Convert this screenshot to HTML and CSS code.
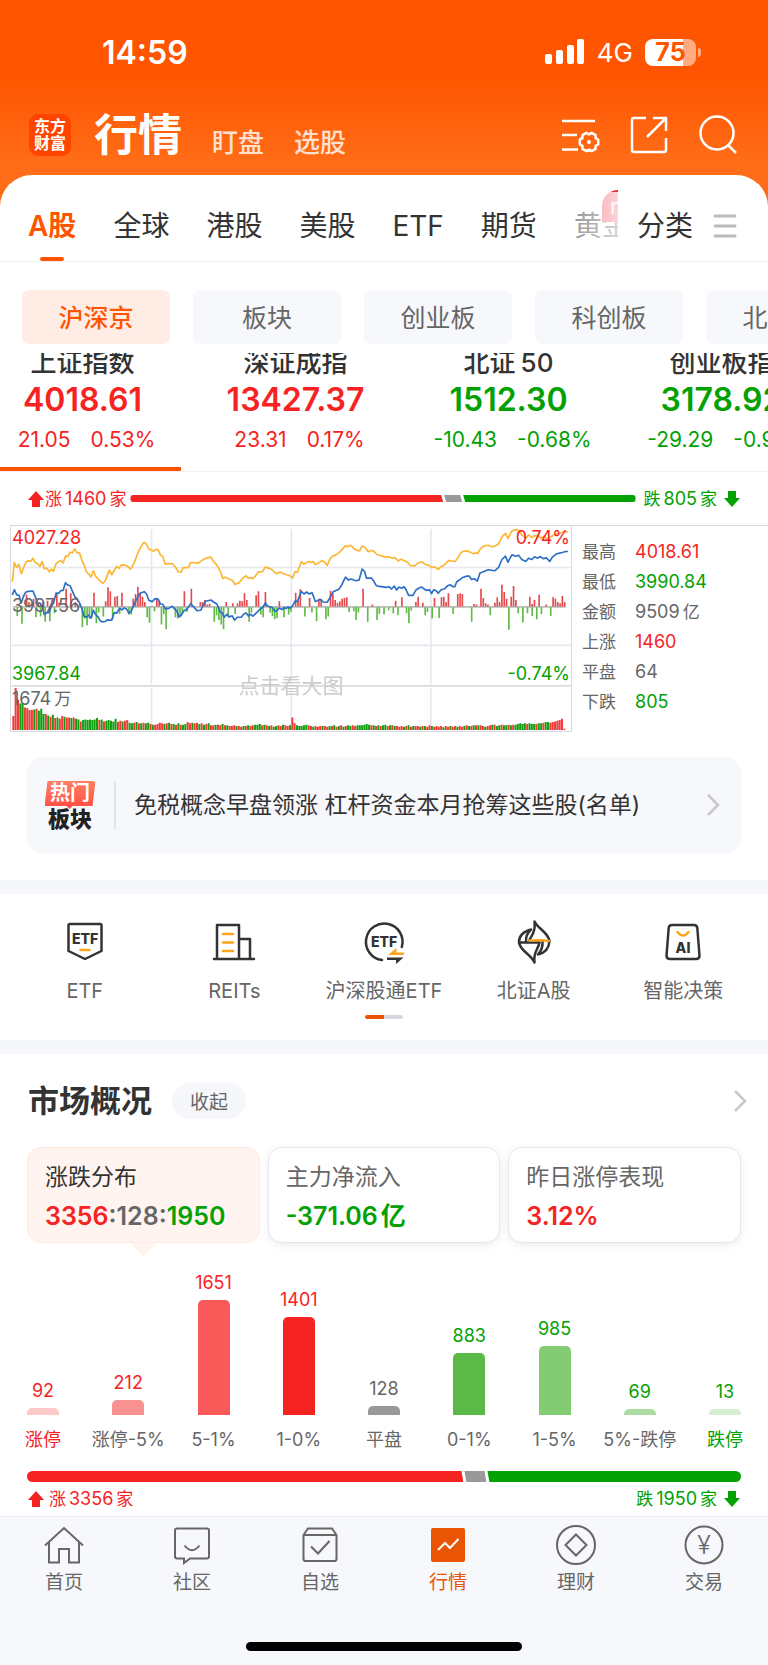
FILE: index.html
```html
<!DOCTYPE html>
<html lang="zh-CN">
<head>
  <meta charset="UTF-8" />
  <meta name="viewport" content="width=device-width, initial-scale=1.0">
  <title>行情 - 东方财富</title>
  <link rel="stylesheet" href="styles.css">
</head>
<body>
<div class="app">
  <div class="status-bar">
    <span class="time">14:59</span>
    <div class="status-right">
      <svg class="signal" width="40" height="26" viewBox="0 0 40 26" fill="#fff">
        <rect x="0" y="15" width="7" height="10" rx="2"/>
        <rect x="11" y="11" width="7" height="14" rx="2"/>
        <rect x="22" y="6" width="7" height="19" rx="2"/>
        <rect x="32" y="0" width="7" height="25" rx="2"/>
      </svg>
      <span class="network">4G</span>
      <span class="battery">75</span>
    </div>
  </div>

  <header class="header">
    <div class="logo">东方<br>财富</div>
    <h1>行情</h1>
    <a class="sub-link" href="#">盯盘</a>
    <a class="sub-link" href="#">选股</a>
    <div class="header-icons">
      <button aria-label="设置">
        <svg width="40" height="40" viewBox="0 0 40 40">
          <path d="M2 6h33M2 20h15M2 34.500h16"/>
          <path d="M38.200 24.700V29.300L35.600 30.800V33.800L31.600 36.100 29 34.600 26.400 36.100 22.400 33.800V30.800L19.800 29.300V24.700L22.400 23.200V20.200L26.400 17.900 29 19.400 31.600 17.900 35.600 20.200V23.200Z"/>
          <circle cx="29" cy="27" r="2" fill="#fff" stroke="none"/>
        </svg>
      </button>
      <button aria-label="分享">
        <svg width="40" height="40" viewBox="0 0 40 40">
          <path d="M17 3H5Q3 3 3 5V35Q3 37 5 37H35Q37 37 37 35V23M24 3H37V16M37 3L18 22"/>
        </svg>
      </button>
      <button aria-label="搜索">
        <svg width="40" height="40" viewBox="0 0 40 40">
          <circle cx="19" cy="18" r="16.500"/>
          <path d="M30 30L38 38"/>
        </svg>
      </button>
    </div>
  </header>

  <main class="sheet">
    <nav class="tabs">
      <div class="tabs-scroll">
        <a class="active" href="#">A股</a>
        <a href="#">全球</a>
        <a href="#">港股</a>
        <a href="#">美股</a>
        <a href="#">ETF</a>
        <a href="#">期货</a>
        <a href="#">黄金<i class="badge">new</i></a>
      </div>
      <button class="category">分类
        <svg width="24" height="24" viewBox="0 0 24 24"><path d="M2 2H22M2 12H22M2 22H22"/></svg>
      </button>
    </nav>

    <div class="chips">
      <button class="chip active">沪深京</button>
      <button class="chip">板块</button>
      <button class="chip">创业板</button>
      <button class="chip">科创板</button>
      <button class="chip">北交所</button>
    </div>

    <div class="indexes">
      <a class="index up active" href="#">
        <span class="name">上证指数</span>
        <strong>4018.61</strong>
        <span class="change"><span>21.05</span><span>0.53%</span></span>
      </a>
      <a class="index up" href="#">
        <span class="name">深证成指</span>
        <strong>13427.37</strong>
        <span class="change"><span>23.31</span><span>0.17%</span></span>
      </a>
      <a class="index down" href="#">
        <span class="name">北证<b>50</b></span>
        <strong>1512.30</strong>
        <span class="change"><span>-10.43</span><span>-0.68%</span></span>
      </a>
      <a class="index down" href="#">
        <span class="name">创业板指</span>
        <strong>3178.92</strong>
        <span class="change"><span>-29.29</span><span>-0.91%</span></span>
      </a>
    </div>

    <div class="breadth">
      <span class="count up"><svg width="16" height="16" viewBox="0 0 16 16"><path d="M8 0L16 9H12V16H4V9H0Z"/></svg>涨<b>1460</b>家</span>
      <div class="ratio">
        <i class="r-up" style="flex-grow: 1460"></i>
        <i class="r-flat" style="flex-grow: 64"></i>
        <i class="r-down" style="flex-grow: 805"></i>
      </div>
      <span class="count down">跌<b>805</b>家<svg width="16" height="16" viewBox="0 0 16 16"><path d="M8 16L0 7H4V0H12V7H16Z"/></svg></span>
    </div>

    <div class="quote">
      <div class="chart">
        <svg viewBox="30 45 1686 618" preserveAspectRatio="none">
          <g class="grid">
            <path d="M32 170H1716M32 405H1716M453 54V522M874 54V522M1294 54V522M453 533V660M874 533V660M1294 533V660"/>
            <path class="sep" d="M32 527H1716"/>
            <path class="mid" d="M36 289H1700"/>
          </g>
          <path id="diffUp" class="bar-up"/>
          <path id="diffDown" class="bar-down"/>
          <path id="volUp" class="vol-up"/>
          <path id="volDown" class="vol-down"/>
          <polyline class="line-avg" points="34,213 40,155 47,170 54,160 61,189 68,170 75,154 82,150 90,151 96,142 103,155 110,158 117,167 124,152 130,174 138,172 145,183 152,175 158,181 166,158 173,153 180,149 187,156 194,136 201,137 208,124 215,126 222,114 229,126 236,126 243,147 250,162 257,183 264,190 271,199 278,180 285,197 292,204 299,211 306,218 313,212 326,178 333,192 348,167 355,173 362,163 369,162 376,164 383,168 390,175 397,164 404,148 411,129 418,114 425,101 431,94 438,100 445,115 452,117 459,121 466,115 473,117 480,132 487,137 494,160 508,158 516,159 524,168 534,183 542,184 549,170 563,171 571,155 594,157 606,148 618,141 632,139 640,152 650,163 660,182 668,203 676,199 684,204 697,209 704,221 716,217 728,202 738,195 745,203 752,200 758,204 766,196 775,184 788,182 795,169 806,172 816,177 828,189 840,184 850,189 868,194 878,202 885,182 892,185 904,153 912,160 922,154 928,152 934,155 940,152 946,161 952,159 965,150 973,152 982,164 990,145 998,136 1008,132 1017,126 1026,117 1036,105 1045,107 1053,103 1062,113 1070,118 1080,120 1087,105 1096,110 1106,123 1114,119 1122,121 1132,131 1142,134 1155,138 1168,138 1178,142 1185,140 1196,150 1205,145 1217,151 1224,154 1232,164 1245,165 1257,156 1267,153 1278,161 1287,163 1296,170 1306,168 1316,176 1324,168 1334,163 1348,149 1367,152 1374,143 1384,126 1392,121 1402,120 1412,123 1422,129 1428,126 1435,128 1443,114 1454,105 1466,103 1476,107 1486,106 1498,99 1508,78 1519,67 1526,83 1538,60 1550,56 1558,58 1568,72 1580,82 1588,72 1598,80 1606,74 1616,75 1625,82 1634,76 1644,84 1653,80 1662,73 1672,70 1682,67 1694,63 1707,62"/>
          <polyline class="line-price" points="34,253 40,237 47,252 54,254 61,277 68,256 75,244 82,242 96,241 103,258 110,277 117,277 124,289 130,312 138,306 145,306 152,286 158,277 166,247 173,248 180,240 187,239 194,216 201,223 208,225 215,242 222,258 229,264 236,276 243,293 250,317 257,320 264,314 271,323 278,299 285,312 292,319 299,331 306,334 313,333 320,328 333,329 341,306 348,308 357,293 364,298 371,292 378,295 385,308 392,302 399,285 406,270 413,256 420,247 431,243 438,250 445,269 455,273 464,264 473,265 480,280 487,281 494,294 504,294 515,287 522,294 529,301 536,319 542,315 549,302 560,295 571,279 582,291 590,300 601,299 608,285 616,272 632,268 640,274 650,280 660,305 666,307 672,320 680,311 686,319 696,316 703,329 711,320 723,320 731,310 738,307 745,316 752,311 758,317 768,308 778,297 788,290 796,277 803,287 816,290 824,303 832,299 838,292 846,297 852,291 858,294 864,289 870,293 878,285 886,271 892,273 904,242 912,250 920,244 928,250 936,246 942,260 946,273 952,270 960,266 970,274 982,275 990,262 1000,243 1017,236 1026,222 1037,199 1046,208 1054,205 1068,210 1078,208 1087,175 1095,183 1100,202 1115,202 1122,211 1130,225 1140,227 1160,230 1168,228 1176,235 1184,226 1191,238 1198,229 1206,233 1213,228 1220,238 1227,254 1240,254 1250,237 1260,231 1267,229 1275,236 1283,239 1290,237 1296,249 1303,237 1311,241 1316,248 1325,237 1336,234 1345,225 1352,222 1360,228 1366,228 1372,213 1380,208 1390,200 1402,196 1410,196 1416,206 1425,204 1434,211 1442,187 1452,183 1466,177 1486,180 1498,170 1508,146 1519,136 1526,154 1538,132 1550,136 1558,133 1568,146 1580,152 1588,142 1598,146 1606,138 1616,142 1622,137 1634,144 1642,141 1652,152 1660,139 1672,129 1690,125 1700,122 1707,122"/>
        </svg>
        <span class="lbl top up">4027.28</span>
        <span class="lbl middle">3997.56</span>
        <span class="lbl bottom down">3967.84</span>
        <span class="lbl volume">1674<b>万</b></span>
        <span class="lbl top right up">0.74%</span>
        <span class="lbl bottom right down">-0.74%</span>
        <span class="hint">点击看大图</span>
      </div>
      <dl class="stats">
        <dt>最高</dt><dd class="up">4018.61</dd>
        <dt>最低</dt><dd class="down">3990.84</dd>
        <dt>金额</dt><dd>9509<b>亿</b></dd>
        <dt>上涨</dt><dd class="up">1460</dd>
        <dt>平盘</dt><dd>64</dd>
        <dt>下跌</dt><dd class="down">805</dd>
      </dl>
    </div>

    <a class="hot" href="#">
      <span class="hot-tag"><em>热门</em><strong>板块</strong></span>
      <span class="hot-text">免税概念早盘领涨 杠杆资金本月抢筹这些股(名单)</span>
      <svg class="chevron" width="14" height="24" viewBox="0 0 14 24"><path d="M2 2L12 12 2 22"/></svg>
    </a>

    <section class="shortcuts">
      <ul>
        <li><a href="#">
          <svg width="44" height="44" viewBox="0 0 44 44">
            <path d="M5.500 5.500Q5.500 4 7 4H37Q38.500 4 38.500 5.500V31L22 39 5.500 31Z"/>
            <path class="accent" d="M17.500 30H26.500"/>
            <text x="22" y="24">ETF</text>
          </svg>ETF</a></li>
        <li><a href="#">
          <svg width="44" height="44" viewBox="0 0 44 44">
            <path d="M2 39H42M5 39V5H27V39M27 19H38V39"/>
            <path class="accent" d="M11 14H21M11 22.500H21M11 31H21"/>
          </svg>REITs</a></li>
        <li><a href="#">
          <svg width="44" height="44" viewBox="0 0 44 44">
            <path d="M39.800 27A18.300 18.300 0 1 0 20 40"/>
            <text x="22" y="27">ETF</text>
            <path class="fill-accent" d="M26 35L34.500 28V32.500H42V35Z"/>
            <path class="fill-dark" d="M25 37.500H41.500L34 44V40H25Z"/>
          </svg>沪深股通ETF</a></li>
        <li><a href="#">
          <svg width="44" height="44" viewBox="0 0 44 44">
            <path d="M17.500 20C19 16 24 13 22.500 1.500 26 9 36 12 37.500 21M27.500 22.500C26 30 21 32 22.500 42.500 19 34 8 31 7 22.500ZM19 9.500C10 12 7 17 7 22M19 9.500C14 14 14 18 14 22M37.500 21C37 28 33 33 26 34.500M26 34.500C30 30 31 26 30.500 21"/>
            <path class="accent" d="M17.500 20.500C24 21 28 19 37 21"/>
          </svg>北证A股</a></li>
        <li><a href="#">
          <svg width="44" height="44" viewBox="0 0 44 44">
            <path d="M11 5H33Q36 5 36.300 8L38.500 35.500Q38.500 39 35 39H9Q5.500 39 5.500 35.500L7.700 8Q8 5 11 5Z"/>
            <path class="accent" d="M16.500 12Q22 19 27.500 12"/>
            <text x="22" y="33">AI</text>
          </svg>智能决策</a></li>
      </ul>
      <div class="pager"></div>
    </section>

    <section class="market">
      <div class="market-head">
        <h2>市场概况</h2>
        <button class="fold">收起</button>
        <svg class="chevron" width="14" height="24" viewBox="0 0 14 24"><path d="M2 2L12 12 2 22"/></svg>
      </div>

      <div class="cards">
        <button class="card active">
          <span>涨跌分布</span>
          <strong><b class="up">3356</b>:128:<b class="down">1950</b></strong>
        </button>
        <button class="card">
          <span>主力净流入</span>
          <strong class="down">-371.06<b class="unit">亿</b></strong>
        </button>
        <button class="card">
          <span>昨日涨停表现</span>
          <strong class="up">3.12%</strong>
        </button>
      </div>

      <ul class="spread">
        <li class="up"><b>92</b><i class="u1" style="height: 7px"></i><span>涨停</span></li>
        <li class="up"><b>212</b><i class="u2" style="height: 15px"></i><span class="flat">涨停-5%</span></li>
        <li class="up"><b>1651</b><i class="u3" style="height: 115px"></i><span class="flat">5-1%</span></li>
        <li class="up"><b>1401</b><i class="u4" style="height: 98px"></i><span class="flat">1-0%</span></li>
        <li class="flat"><b>128</b><i class="f1" style="height: 9px"></i><span>平盘</span></li>
        <li class="down"><b>883</b><i class="d4" style="height: 62px"></i><span class="flat">0-1%</span></li>
        <li class="down"><b>985</b><i class="d3" style="height: 69px"></i><span class="flat">1-5%</span></li>
        <li class="down"><b>69</b><i class="d2" style="height: 6px"></i><span class="flat">5%-跌停</span></li>
        <li class="down"><b>13</b><i class="d1" style="height: 6px"></i><span>跌停</span></li>
      </ul>

      <div class="ratio thick">
        <i class="r-up" style="flex-grow: 3356"></i>
        <i class="r-flat" style="flex-grow: 128"></i>
        <i class="r-down" style="flex-grow: 1950"></i>
      </div>
      <div class="totals">
        <span class="count up"><svg width="16" height="16" viewBox="0 0 16 16"><path d="M8 0L16 9H12V16H4V9H0Z"/></svg>涨<b>3356</b>家</span>
        <span class="count down">跌<b>1950</b>家<svg width="16" height="16" viewBox="0 0 16 16"><path d="M8 16L0 7H4V0H12V7H16Z"/></svg></span>
      </div>
    </section>
  </main>

  <footer class="tabbar">
    <nav>
      <a href="#"><svg width="40" height="40" viewBox="0 0 40 40"><path d="M1 20.500L20 3 39 20.500M5 17V37.500H15V24H25V37.500H35V17"/></svg>首页</a>
      <a href="#"><svg width="40" height="40" viewBox="0 0 40 40"><path d="M5 3.500H35Q37 3.500 37 5.500V31.500Q37 33.500 35 33.500H18L12 38V33.500H5Q3 33.500 3 31.500V5.500Q3 3.500 5 3.500ZM12.500 20.500Q20 30 27.500 20.500"/></svg>社区</a>
      <a href="#"><svg width="40" height="40" viewBox="0 0 40 40"><path d="M3.500 10V34Q3.500 36 5.500 36H34.500Q36.500 36 36.500 34V10L32 3.500H8ZM3.500 10H36.500M11 21.500L18 28.500 29.500 16"/></svg>自选</a>
      <a class="active" href="#"><svg width="40" height="40" viewBox="0 0 40 40"><rect class="solid" x="3" y="3" width="34" height="34" rx="2"/><path class="zig" d="M10 25L17 18 22 23 30.500 14"/></svg>行情</a>
      <a href="#"><svg width="40" height="40" viewBox="0 0 40 40"><circle cx="20" cy="20" r="19"/><path d="M20 9.500L30.500 20 20 30.500 9.500 20Z"/></svg>理财</a>
      <a href="#"><svg width="40" height="40" viewBox="0 0 40 40"><circle cx="20" cy="20" r="18.500"/><text x="20" y="29">¥</text></svg>交易</a>
    </nav>
    <div class="home-bar"></div>
  </footer>
</div>
<script src="chart.js"></script>
</body>
</html>
```

FILE: styles.css
```css
* {
  box-sizing: border-box;
}
body {
  margin: 0;
  font-family: Inter, "Noto Sans CJK SC", sans-serif;
  color: #666;
  background: #f7f8fb;
}
h1, h2, ul, dl, dd {
  margin: 0;
  padding: 0;
}
ul {
  list-style: none;
}
a {
  color: inherit;
  text-decoration: none;
}
button {
  margin: 0;
  padding: 0;
  border: none;
  background: none;
  font: inherit;
  color: inherit;
  cursor: pointer;
}
b, i, em {
  font-weight: inherit;
  font-style: normal;
}
svg {
  flex: none;
}
.app {
  background: linear-gradient(#ff5500 0, #ff5500 75px, #ff6d18 165px, #ff6d18 100%);
}
.up { color: #f62323; }
.down { color: #03a103; }
.flat { color: #666; }

/* 状态栏 */
.status-bar {
  display: flex;
  justify-content: space-between;
  align-items: center;
  height: 100px;
  padding: 4px 68px 0 102px;
  color: #fff;
}
.time {
  font-size: 32px;
  font-weight: 600;
}
.status-right {
  display: flex;
  align-items: center;
}
.network {
  margin: 0 12px;
  font-size: 26px;
}
.battery {
  position: relative;
  width: 51px;
  height: 27px;
  margin-right: 4px;
  border-radius: 8px;
  background: linear-gradient(to right, #fff 75%, #ffaa80 75%);
  color: #ff5500;
  font-size: 25px;
  font-weight: 700;
  line-height: 27px;
  text-align: center;
}
.battery::after {
  content: "";
  position: absolute;
  right: -5px;
  top: 9px;
  width: 3px;
  height: 9px;
  border-radius: 0 3px 3px 0;
  background: #ffaa80;
}

/* 顶部 */
.header {
  display: flex;
  align-items: center;
  height: 75px;
  padding: 0 30px 6px 29px;
  color: #fff;
}
.logo {
  width: 42px;
  height: 42px;
  margin-right: 23px;
  padding-top: 4px;
  border-radius: 9px;
  background: #ff4400;
  font-size: 16px;
  font-weight: 700;
  line-height: 17px;
  text-align: center;
}
.header h1 {
  font-size: 44px;
  font-weight: 700;
  line-height: 60px;
}
.sub-link {
  margin: 16px 0 0 30px;
  font-size: 26px;
  font-weight: 500;
  line-height: 36px;
  opacity: .8;
}
.header-icons {
  display: flex;
  gap: 29px;
  margin-left: auto;
}
.header-icons svg {
  display: block;
  fill: none;
  stroke: #fff;
  stroke-width: 2.5;
  stroke-linejoin: round;
}

.sheet {
  overflow: hidden;
  border-radius: 32px 32px 0 0;
  background: #fff;
}

/* 一级标签 */
.tabs {
  display: flex;
  height: 87px;
  padding: 0 31px 0 28px;
  border-bottom: 1px solid #eee;
  color: #333;
  font-size: 28px;
  line-height: 40px;
}
.tabs-scroll {
  position: relative;
  display: flex;
  flex: 1;
  gap: 37px;
  overflow: hidden;
  padding-top: 31px;
  white-space: nowrap;
}
.tabs-scroll::after {
  content: "";
  position: absolute;
  top: 17px;
  right: 0;
  bottom: 0;
  width: 48px;
  background: linear-gradient(to right, rgba(255,255,255,.45), rgba(255,255,255,.8));
}
.tabs-scroll a {
  position: relative;
}
.tabs-scroll .active {
  color: #ff5500;
  font-weight: 600;
}
.tabs-scroll .active::after {
  content: "";
  position: absolute;
  left: 50%;
  bottom: 0;
  width: 24px;
  height: 4px;
  margin-left: -12px;
  border-radius: 2px;
  background: #ff5500;
}
.badge {
  position: absolute;
  left: 28px;
  top: -16px;
  width: 56px;
  height: 32px;
  padding-left: 8px;
  border-radius: 16px 16px 16px 0;
  background: #ee2a3a;
  color: #fff;
  font-size: 22px;
  line-height: 32px;
}
.category {
  display: flex;
  align-items: center;
  gap: 20px;
  height: 40px;
  margin: 31px 0 0 19px;
}
.category svg {
  fill: none;
  stroke: #bbb;
  stroke-width: 3;
  stroke-linecap: round;
}

.chips {
  display: flex;
  gap: 23px;
  overflow: hidden;
  padding: 28px 0 9px 22px;
}
.chip {
  flex: 0 0 148px;
  height: 54px;
  padding-bottom: 2px;
  border-radius: 7px;
  background: #f7f8fb;
  font-size: 25px;
}
.chip.active {
  background: #ffede5;
  color: #ff5500;
  font-weight: 500;
}

/* 指数 */
.indexes {
  display: flex;
  overflow: hidden;
  margin-left: -24px;
  border-bottom: 1px solid #f2f2f2;
}
.index {
  display: flex;
  flex: 0 0 213px;
  flex-direction: column;
  align-items: center;
  min-height: 118px;
}
.index.active {
  background: linear-gradient(#ff5500, #ff5500) no-repeat left bottom / 205px 4px;
}
.index .name {
  margin-top: -6px;
  color: #333;
  font-size: 26px;
  font-weight: 500;
  line-height: 32px;
}
.name b {
  margin-left: 5px;
}
.index strong {
  margin-top: 2px;
  font-size: 32px;
  font-weight: 600;
  line-height: 38px;
}
.change {
  display: flex;
  gap: 20px;
  margin: 7px 0 0 8px;
  font-size: 21px;
  line-height: 28px;
}

/* 涨跌家数 */
.breadth {
  display: flex;
  align-items: center;
  gap: 4px;
  height: 53px;
  padding: 0 28px;
}
.count {
  display: flex;
  align-items: center;
  font-size: 17px;
  line-height: 22px;
}
.count svg {
  fill: currentColor;
}
.count b {
  margin: 0 3px;
  font-size: 18px;
}
.breadth .up svg {
  margin-right: 1px;
}
.count.down svg {
  margin-left: 7px;
}
.breadth .down {
  margin-left: 4px;
}
.ratio {
  display: flex;
  flex: 1;
  gap: 1px;
  height: 7px;
}
.ratio.thick {
  flex: none;
  height: 11px;
}
.r-up {
  border-radius: 6px 0 0 6px;
  background: #f62323;
  clip-path: polygon(0 0, calc(100% - 2px) 0, 100% 100%, 0 100%);
}
.r-flat {
  min-width: 18px;
  background: #999;
  clip-path: polygon(0 0, calc(100% - 2px) 0, 100% 100%, 2px 100%);
}
.thick .r-flat {
  min-width: 22px;
}
.r-down {
  border-radius: 0 6px 6px 0;
  background: #03a103;
  clip-path: polygon(0 0, 100% 0, 100% 100%, 2px 100%);
}

/* 分时图 */
.quote {
  display: grid;
  grid-template-columns: 562fr 196fr;
  margin-left: 10px;
  border-top: 1px solid #d5d6da;
}
.chart {
  position: relative;
  height: 206px;
  border: 1px solid #dadbe2;
  border-top: none;
  font-size: 18px;
}
.chart svg {
  display: block;
  width: 100%;
  height: 100%;
}
.chart path, .chart polyline {
  fill: none;
}
.grid path {
  stroke: #e6e8f0;
  stroke-width: 5;
}
.grid .sep {
  stroke: #d9dbe0;
}
.grid .mid {
  stroke: #888;
  stroke-width: 3;
}
.bar-up { stroke: #e4494d; stroke-width: 5; }
.bar-down { stroke: #5fba46; stroke-width: 5; }
.vol-up { stroke: #f23a3a; stroke-width: 6; }
.vol-down { stroke: #10a010; stroke-width: 6; }
.chart polyline {
  stroke-width: 5;
  stroke-linejoin: round;
}
.chart .line-avg { stroke: #fcb632; }
.chart .line-price { stroke: #2d6fc4; }
.lbl {
  position: absolute;
  left: 1px;
  line-height: 20px;
}
.lbl.right {
  left: auto;
  right: 1px;
}
.lbl.top { top: 2px; }
.lbl.middle { top: 70px; }
.lbl.bottom { top: 138px; }
.lbl.volume { top: 163px; }
.volume b, .stats b {
  margin-left: 3px;
  font-size: 17px;
}
.hint {
  position: absolute;
  left: 0;
  right: 0;
  top: 146px;
  color: #ccc;
  font-size: 21px;
  line-height: 28px;
  text-align: center;
}
.stats {
  display: grid;
  grid-template-columns: 53px 1fr;
  align-content: start;
  padding: 11px 0 0 10px;
  font-size: 17px;
  line-height: 30px;
}
.stats dd {
  font-size: 18px;
}

/* 热门板块 */
.hot {
  display: flex;
  align-items: center;
  height: 96px;
  margin: 25px 27px 27px;
  padding: 0 21px 0 18px;
  border-radius: 16px;
  background: #f7f8fb;
}
.hot-tag {
  display: flex;
  flex-direction: column;
  align-items: center;
  width: 71px;
  padding-right: 19px;
  border-right: 2px solid #e3e4e8;
}
.hot-tag em {
  width: 51px;
  height: 28px;
  border-radius: 4px;
  background: linear-gradient(#ff7f66, #ff4d40);
  clip-path: polygon(3px 0, 100% 0, 48px 25px, 28px 25px, 25px 28px, 22px 25px, 0 25px);
  color: #fff;
  font-size: 20px;
  font-weight: 700;
  line-height: 25px;
  text-align: center;
}
.hot-tag strong {
  color: #222;
  font-size: 22px;
  font-weight: 900;
  line-height: 20px;
}
.hot-text {
  flex: 1;
  margin-left: 18px;
  color: #333;
  font-size: 23px;
  line-height: 34px;
}
.chevron {
  fill: none;
  stroke: #c8c8c8;
  stroke-width: 2.5;
}

/* 快捷入口 */
.shortcuts {
  padding: 26px 10px 21px;
  border-top: 14px solid #f6f7fa;
  border-bottom: 14px solid #f6f7fa;
}
.shortcuts ul {
  display: grid;
  grid-template-columns: repeat(5, 1fr);
}
.shortcuts a {
  display: flex;
  flex-direction: column;
  align-items: center;
  gap: 13px;
  font-size: 20px;
  line-height: 28px;
}
.shortcuts path {
  fill: none;
  stroke: #333;
  stroke-width: 2.5;
  stroke-linecap: round;
  stroke-linejoin: round;
}
.shortcuts .accent {
  stroke: #ffa41c;
}
.shortcuts .fill-accent {
  fill: #ffa41c;
  stroke: none;
}
.shortcuts .fill-dark {
  fill: #333;
  stroke: none;
}
.shortcuts text {
  fill: #333;
  font-size: 14px;
  font-weight: 800;
  text-anchor: middle;
}
.pager {
  width: 38px;
  height: 4px;
  margin: 10px auto 0;
  border-radius: 2px;
  background: linear-gradient(to right, #ea5504 50%, #d5d9df 50%);
}

/* 市场概况 */
.market {
  padding: 29px 27px 6px;
}
.market-head {
  display: flex;
  align-items: center;
  height: 36px;
}
.market-head h2 {
  padding: 0 0 1px 1px;
  color: #333;
  font-size: 31px;
  font-weight: 700;
  line-height: 36px;
}
.fold {
  width: 74px;
  height: 36px;
  margin-left: 20px;
  padding-bottom: 2px;
  border-radius: 18px;
  background: #f6f7fa;
  font-size: 19px;
}
.market-head .chevron {
  margin: 0 -6px 0 auto;
}
.cards {
  display: grid;
  grid-template-columns: repeat(3, 1fr);
  gap: 8px;
  margin-top: 28px;
}
.card {
  position: relative;
  display: flex;
  flex-direction: column;
  align-items: flex-start;
  height: 96px;
  padding: 13px 17px;
  border: 1px solid #e8e8ea;
  border-radius: 14px;
  background: #fff;
  box-shadow: 0 2px 8px rgba(0,0,0,.08);
  font-size: 23px;
  line-height: 32px;
}
.card strong {
  margin-top: 7px;
  font-size: 25px;
  font-weight: 600;
}
.card .unit {
  margin-left: 3px;
}
.card.active {
  border-color: #ffe8dd;
  background: #fff4ef;
  box-shadow: none;
}
.card.active span {
  color: #333;
}
.card.active::after {
  content: "";
  position: absolute;
  left: 50%;
  bottom: -10px;
  width: 18px;
  height: 18px;
  margin-left: -9px;
  border: solid #ffe8dd;
  border-width: 0 1px 1px 0;
  background: linear-gradient(135deg, transparent 50%, #fff4ef 50%);
  clip-path: polygon(100% 0, 100% 100%, 0 100%);
  transform: rotate(45deg);
}
.spread {
  display: flex;
  justify-content: space-between;
  margin-top: 12px;
  font-size: 18px;
  line-height: 24px;
}
.spread li {
  display: flex;
  flex-direction: column;
  align-items: center;
  justify-content: flex-end;
  width: 32px;
  height: 197px;
  white-space: nowrap;
}
.spread i {
  width: 32px;
  margin: 5px 0 13px;
  border-radius: 5px 5px 0 0;
}
.u1 { background: #fcc8c8; }
.u2 { background: #fa9191; }
.u3 { background: #f85a5a; }
.u4 { background: #f62323; }
.f1 { background: #999; }
.d4 { background: #5bb946; }
.d3 { background: #84cc74; }
.d2 { background: #addca2; }
.d1 { background: #d5eed0; }
.market .thick {
  margin-top: 19px;
}
.totals {
  display: flex;
  justify-content: space-between;
  margin-top: 6px;
  padding: 0 1px;
}
.totals .up svg {
  margin-right: 5px;
}

/* 底部导航 */
.tabbar {
  padding: 8px 0 15px;
  border-top: 1px solid #ebebef;
  background: #f7f8fb;
}
.tabbar nav {
  display: grid;
  grid-template-columns: repeat(6, 1fr);
}
.tabbar a {
  display: flex;
  flex-direction: column;
  align-items: center;
  gap: 6px;
  font-size: 19px;
  line-height: 24px;
}
.tabbar .active {
  color: #ea5504;
}
.tabbar svg {
  fill: none;
  stroke: currentColor;
  stroke-width: 2;
}
.tabbar text {
  fill: currentColor;
  stroke: none;
  font-size: 25px;
  font-weight: 300;
  text-anchor: middle;
}
.tabbar .solid {
  fill: #ea5504;
  stroke: none;
}
.tabbar .zig {
  stroke: #fff;
}
.home-bar {
  width: 36%;
  height: 9px;
  margin: 47px auto 0;
  border-radius: 5px;
  background: #000;
}
```

FILE: chart.js
```javascript
// 涨跌动能柱: [x, 高度]
const up = [[77,36],[84,14],[98,24],[112,10],[126,14],[140,18],[154,20],[168,38],[175,12],[196,54],[210,40],[224,14],[238,6],[280,42],[315,16],[322,58],[329,46],[343,30],[350,32],[364,42],[398,24],[405,38],[412,60],[419,42],[426,30],[433,14],[469,26],[476,16],[552,46],[573,54],[600,14],[607,14],[614,20],[621,6],[628,8],[678,14],[698,10],[712,10],[719,18],[726,16],[733,40],[740,20],[768,34],[775,46],[796,44],[838,16],[887,42],[894,20],[901,52],[929,26],[957,20],[964,24],[992,48],[999,40],[1006,20],[1013,12],[1020,16],[1027,24],[1034,26],[1041,28],[1090,54],[1118,6],[1188,18],[1207,28],[1249,14],[1256,30],[1270,12],[1305,26],[1326,28],[1333,30],[1340,14],[1347,40],[1375,38],[1382,40],[1389,38],[1424,8],[1431,6],[1445,54],[1452,26],[1459,10],[1466,6],[1487,12],[1494,28],[1501,14],[1508,66],[1515,44],[1522,24],[1536,30],[1543,62],[1550,20],[1592,30],[1599,8],[1606,20],[1620,36],[1641,6],[1662,28],[1669,24],[1676,14],[1683,10],[1690,32],[1697,14]];
const down = [[49,26],[63,50],[105,30],[119,28],[133,44],[147,42],[161,18],[245,60],[252,34],[259,54],[266,34],[273,30],[287,48],[294,16],[308,28],[336,36],[357,20],[385,22],[392,22],[440,30],[447,46],[462,12],[483,52],[490,20],[497,66],[525,30],[532,34],[539,30],[546,20],[560,14],[642,44],[649,24],[656,38],[663,52],[670,66],[684,28],[705,20],[747,44],[754,16],[782,22],[789,30],[810,16],[817,26],[824,36],[831,32],[852,30],[866,22],[873,14],[915,28],[936,16],[950,42],[978,36],[985,28],[1048,14],[1062,12],[1069,38],[1076,16],[1104,44],[1132,38],[1139,20],[1153,22],[1167,10],[1181,18],[1195,24],[1221,18],[1228,48],[1235,10],[1277,24],[1284,14],[1298,34],[1319,32],[1361,20],[1417,44],[1473,24],[1529,68],[1557,18],[1571,46],[1585,18],[1599,26],[1613,36],[1627,20],[1655,26]];

// 成交量, 负数为绿色
const volume = [42,127,92,-80,-82,68,66,60,60,-62,64,-58,-64,-48,48,-44,40,-46,36,-38,34,42,-40,38,38,-36,38,-34,-32,26,-30,-32,-30,-32,-30,-32,-36,30,-32,26,-28,-30,-28,-26,-34,24,28,-26,28,30,-22,-20,22,-24,20,-20,22,-20,-22,18,-16,16,18,22,20,-18,20,-22,18,-18,16,-20,16,-16,-18,24,20,-22,20,22,-18,20,-16,18,-20,14,14,-16,16,14,-18,14,-14,12,12,14,-12,12,10,-12,12,-14,12,14,-16,-16,-18,14,-16,14,-12,14,-10,-12,14,12,-16,14,12,-14,38,20,-14,-12,-12,-14,-16,14,12,-10,12,10,12,-12,12,10,-12,12,-14,10,-12,14,-10,12,-14,-12,14,12,-14,-14,-14,-16,-18,-16,14,-14,12,-14,12,-14,-16,12,-14,14,-12,12,10,12,-10,12,-14,10,-12,12,12,-10,12,-12,10,14,-12,10,12,10,12,-8,12,10,-12,10,12,-10,12,10,-12,14,-12,12,-14,14,-14,14,12,-10,12,14,-16,16,-12,-14,16,-14,-14,16,-14,16,-16,-18,-20,-18,-20,18,-20,-18,-18,18,-20,-20,22,-24,-24,22,24,26,28,30,34,4];

const bars = (list, base, dir) => list.map(([x, h]) => `M${x} ${base}v${h * dir}`).join('');
const vol = volume.map((v, i) => [37 + i * 7, v]);

document.getElementById('diffUp').setAttribute('d', bars(up, 288, -1));
document.getElementById('diffDown').setAttribute('d', bars(down, 290, 1));
document.getElementById('volUp').setAttribute('d', bars(vol.filter(p => p[1] > 0).map(([x, v]) => [x, v]), 660, -1));
document.getElementById('volDown').setAttribute('d', bars(vol.filter(p => p[1] < 0).map(([x, v]) => [x, -v]), 660, -1));
```
